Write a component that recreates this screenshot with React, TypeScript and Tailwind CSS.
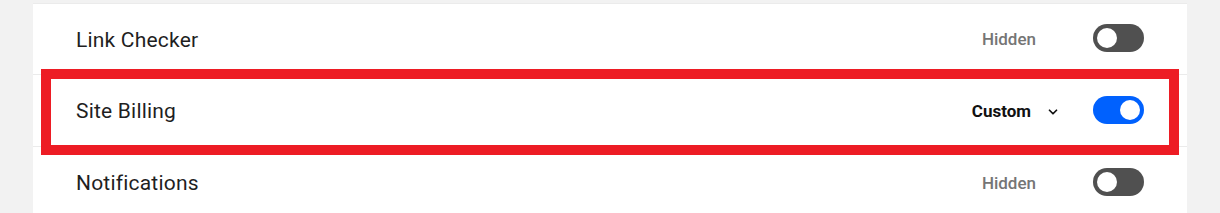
import { ChevronDown } from "lucide-react";

type Row = { label: string; value: string; on: boolean; dropdown?: boolean };

const rows: Row[] = [
  { label: "Link Checker", value: "Hidden", on: false },
  { label: "Site Billing", value: "Custom", on: true, dropdown: true },
  { label: "Notifications", value: "Hidden", on: false },
];

function Toggle({ on }: { on: boolean }) {
  return (
    <div
      className={`w-[51px] h-[28px] mb-[2px] rounded-full flex items-center px-[4px] ${
        on ? "bg-[#0061fe] justify-end" : "bg-[#505050] justify-start"
      }`}
    >
      <div className="w-[20px] h-[20px] rounded-full bg-white"></div>
    </div>
  );
}

export default function App() {
  return (
    <div
      className="w-[1220px] h-[213px] bg-[#f2f2f2] flex justify-center overflow-hidden"
      style={{ fontFamily: "Roboto, 'Liberation Sans', sans-serif" }}
    >
      <div className="relative w-[1154px] bg-white mt-[3px] border-t border-[#ebebeb]">
        {rows.map((r, i) => (
          <div
            key={r.label}
            className={`flex items-center pl-[43px] pr-[43px] ${
              i > 0 ? "h-[72px] border-t border-[#ebebeb]" : "h-[70px]"
            }`}
          >
            <span className="text-[21px] tracking-[0.2px] text-[#1f1f1f] flex-1 pt-[3px]">
              {r.label}
            </span>
            {r.dropdown ? (
              <div className="flex items-center mr-[33px] pt-[2px]">
                <span className="text-[17px] font-bold text-[#111]">{r.value}</span>
                <ChevronDown className="w-[14px] h-[14px] ml-[15px] text-[#111]" strokeWidth={3} />
              </div>
            ) : (
              <span className="text-[17px] font-medium text-[#757575] mr-[57px] pt-[2px]">
                {r.value}
              </span>
            )}
            <Toggle on={r.on} />
          </div>
        ))}
        <div className="absolute left-[8px] top-[65px] w-[1138px] h-[86px] border-[10px] border-[#ed1c24]"></div>
      </div>
    </div>
  );
}
